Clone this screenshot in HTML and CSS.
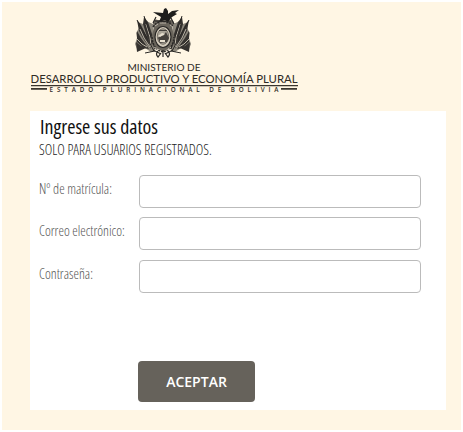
FILE: index.html
```html
<!DOCTYPE html>
<html lang="es">
<head>
<meta charset="utf-8">
<title>Ingrese sus datos</title>
<link rel="stylesheet" href="styles.css">
</head>
<body>
<main class="page">
  <svg class="logo" viewBox="0 2 300 109" role="img" aria-label="Ministerio de Desarrollo Productivo y Economía Plural">
    <defs>
      <g id="flags">
        <path fill="#8b867b" d="M153 24l-7-3-3 3-5-2 1 6-3 5 1 5-2 6 2 5 8-1 6 4 5-3z"/>
        <path fill="#35322f" d="M144 17l4 5 5 15-1 10-5-10-4-13zM137 20l4 5 6 12 4 12-7-9-5-9zM137 31l4 7 8 11-5-1-7-6zM136 42l5 4 5 2-9 4z"/>
        <path fill="none" stroke="#ddd5c5" stroke-width=".8" d="M146 24l4 13 1 9M140 29l4 9 6 9M137 39l5 5 5 3"/>
        <path fill="none" stroke="#292725" d="M144 16l11 33M137 20l17 31M145 53l10-2"/>
      </g>
    </defs>
    <use href="#flags"/>
    <use href="#flags" transform="translate(326 0) scale(-1 1)"/>
    <path fill="#6a655c" d="M153 23q1-5 5-3l10 0q5-1 6 3l-2 5 3 11-4 8-8 5-8-5-4-8 3-11z"/>
    <path fill="none" stroke="#2b2927" stroke-width="1.5" stroke-dasharray="2 1" d="M153 27q4-6 10-5 7-1 10 5M152 37q1 13 11 15 10-2 11-15"/>
    <ellipse cx="163" cy="37" rx="8" ry="10.5" fill="#d3cbbb" stroke="#292725" stroke-width="1.2"/>
    <ellipse cx="163" cy="36.5" rx="5.7" ry="7.8" fill="#aaa497" stroke="#5b564f" stroke-width=".7"/>
    <path fill="#45413c" d="M158 38l3-4 2 2 3-4 3 6-2 4-7 1zM159 30h8v1h-8z"/>
    <path fill="#e9e1d0" d="M158 36l4-3 3 1-5 3zM160 40h5v2h-5z"/>
    <path fill="#1e1d1c" d="M153 12l10 1 1-4 2-1 2 3 0 3 4-3 7-1-4 3 2 1-5 3-4 5-3-2-6 2 2-5-5-3z"/>
    <path fill="none" stroke="#292725" stroke-width="1.2" d="M155 21l16 1M156 17l-3 6M171 18l3 6M153 50l8 4M173 50l-8 4M158 51q-3 3 0 6l3-4M168 51q3 3 0 6l-3-4M163 50v7"/>
    <path fill="none" stroke="#dfd7c8" stroke-width=".7" d="M155 26l3-2M160 23h6M170 25l3 2M154 47l4 3M171 47l-4 3"/>
    <g class="ministry">
      <text x="127.5" y="70.8" font-size="10" textLength="73" lengthAdjust="spacingAndGlyphs">MINISTERIO DE</text>
      <text x="30.5" y="82.7" font-size="11.2" textLength="267" lengthAdjust="spacingAndGlyphs">DESARROLLO PRODUCTIVO Y ECONOMÍA PLURAL</text>
      <text class="state" x="49.5" y="92.4" textLength="229" lengthAdjust="spacing">ESTADO PLURINACIONAL DE BOLIVIA</text>
    </g>
    <path fill="#39352e" d="M31 85h267v1.2H31zM31 88h16v1.8H31zM281 88h16v1.8h-16z"/>
  </svg>
  <form class="panel">
    <h1><span class="title">Ingrese sus datos</span></h1>
    <p><span class="subtitle">SOLO PARA USUARIOS REGISTRADOS.</span></p>
    <div class="row"><label for="matricula"><span>Nº de matrícula:</span></label><input id="matricula" type="text"></div>
    <div class="row"><label for="correo"><span>Correo electrónico:</span></label><input id="correo" type="text"></div>
    <div class="row"><label for="clave"><span>Contraseña:</span></label><input id="clave" type="password"></div>
    <button type="button">ACEPTAR</button>
  </form>
</main>
</body>
</html>
```
FILE: styles.css
```css
* { box-sizing: border-box; }
body { margin: 0; padding: 2px; background: #fff; font-family: "Open Sans", sans-serif; }
.page { width: 459px; height: 428px; background: #fff6e4; overflow: hidden; }
.logo { display: block; width: 300px; height: 109px; margin-left: -2px; }
.ministry { fill: #2e2a25; font-family: Lato, sans-serif; }
.state { font-family: "Open Sans", sans-serif; font-size: 6.3px; font-weight: 600; }
.panel { width: 416px; height: 299px; margin-left: 28px; padding: 4px 0 0 9px; background: #fff; }
h1, p { margin: 0; font-weight: 400; white-space: nowrap; }
h1 { height: 25px; color: #111; font-size: 19px; line-height: 25px; }
p { height: 19px; color: #222; font-size: 14px; line-height: 20px; font-weight: 300; }
h1 span, p span, label span { display: inline-block; font-stretch: 75%; transform-origin: 0 50%; }
.title { transform: translateX(1px) scaleX(1.05); }
.subtitle { transform: scaleX(1.02); }
.row { display: flex; height: 33px; margin-bottom: 9px; }
p + .row { margin-top: 16px; }
.row:nth-of-type(2) { margin-bottom: 10px; }
label { width: 100px; flex: none; color: #555; font-size: 14px; font-weight: 300; line-height: 27px; white-space: nowrap; }
label span { transform: scaleX(.99); }
input { width: 282px; height: 33px; padding: 0 8px; border: 1px solid #bbb; border-radius: 4px; background: #fff; }
button { display: block; width: 117px; height: 41px; margin: 68px 0 0 99px; padding: 0; border: 0; border-radius: 4px; background: #66625b; color: #fff; font: 600 14px/41px "Open Sans", sans-serif; }
```
